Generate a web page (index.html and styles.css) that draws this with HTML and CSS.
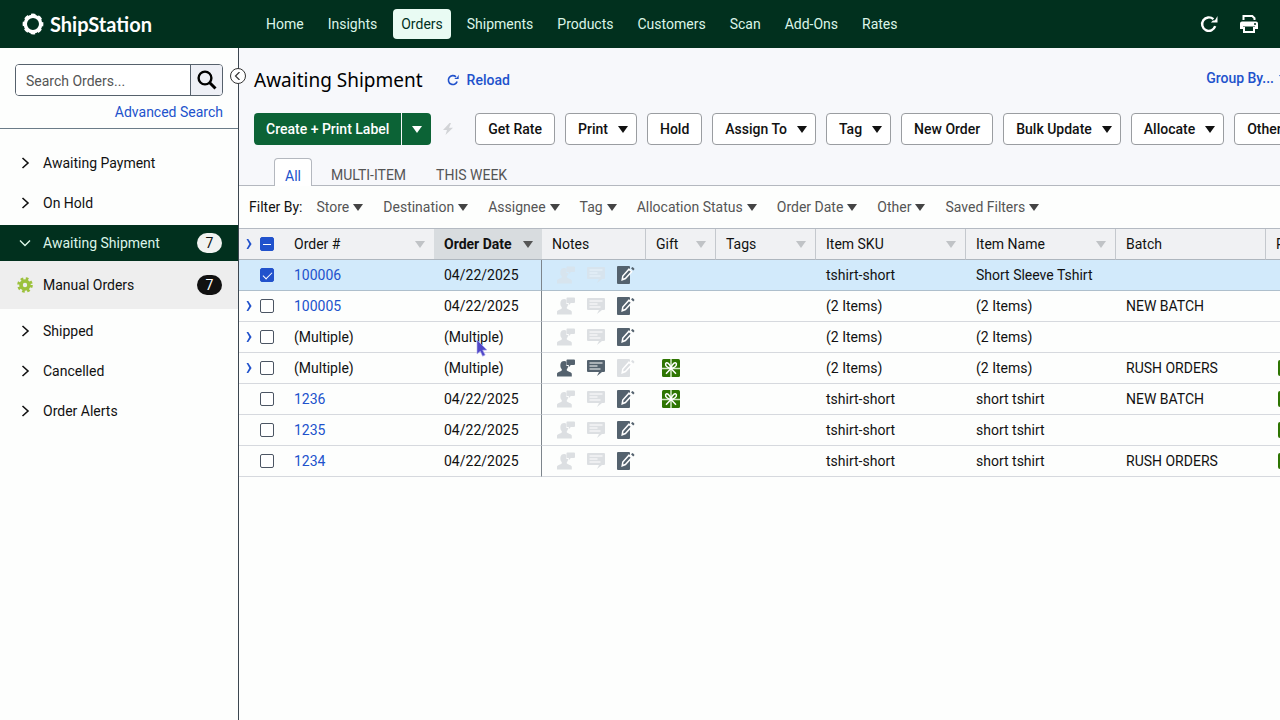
FILE: index.html
```html
<!DOCTYPE html>
<html lang="en">
<head>
    <meta charset="UTF-8">
    <meta name="viewport" content="width=device-width, initial-scale=1.0">
    <title>ShipStation - Orders</title>
    <link rel="stylesheet" href="styles.css">
</head>
<body>

    <!-- Shared icons -->
    <svg class="sprite" aria-hidden="true">
        <symbol id="i-refresh" viewBox="0 0 18 18">
            <path d="M15.200 11.200A6.700 6.700 0 1 1 13.400 4.200" fill="none" stroke="currentColor" stroke-width="2.400"/>
            <path d="M17.500 1v6.600h-6.600l2-2.100 1.600.1 1-1z" fill="currentColor"/>
        </symbol>
        <symbol id="i-right" viewBox="0 0 12 12">
            <path d="M3.500 1L9 6l-5.500 5" fill="none" stroke="currentColor" stroke-width="1.600"/>
        </symbol>
        <symbol id="i-expand" viewBox="0 0 6 10">
            <path d="M.5 0h1.800L5.600 5 2.300 10H.5L3.300 5z" fill="currentColor"/>
        </symbol>
        <symbol id="i-person" viewBox="0 0 18 18">
            <path d="M0 17.500v-2.800c0-1.400 3.800-2.200 4.800-3.200v-1.200C3.600 9 3.200 7.200 3.400 5.400 3.700 3.200 5.200 2 7.200 2c1 0 1.600.2 2.200.7v4.200h1.800c-.2 1.400-.7 2.600-1.400 3.400v1.200c1 1 5 1.800 5 3.200v2.800z" fill="currentColor"/>
            <path d="M10.300.5h6.700q1 0 1 1v3.600q0 1-1 1h-3.200l-2 2.200v-2.200h-1.500q-.8 0-.8-.8V1.300q0-.8.8-.8z" fill="currentColor"/>
        </symbol>
        <symbol id="i-comment" viewBox="0 0 18 18">
            <path d="M1 1h16q1 0 1 1v10q0 1-1 1h-2l-5 4 2-4H1q-1 0-1-1V2q0-1 1-1z" fill="currentColor"/>
            <path d="M2.500 4h13M2.500 7h8M2.500 10h11" stroke="#fff" stroke-width="1.200"/>
        </symbol>
        <symbol id="i-note" viewBox="0 0 18 18">
            <path d="M1 0h11q1 0 1 1v16q0 1-1 1H1q-1 0-1-1V1q0-1 1-1z" fill="currentColor"/>
            <path d="M12 3.200l2.600 2.600-6.200 6.700-3.200 1.300.6-3.700z" fill="currentColor" stroke="#fff" stroke-width="1.500"/>
            <path d="M14 2.200l1.200-1q.5-.3 1 .2l1 1q.5.5 0 1l-1 1.200z" fill="currentColor"/>
        </symbol>
        <symbol id="i-gift" viewBox="0 0 18 18">
            <rect width="18" height="18" rx="1.500" fill="#2e7502"/>
            <path d="M9 0v18M0 9.500h18" stroke="#d5eac8" stroke-width="1.500"/>
            <path d="M9 9.500C6 9 3.200 7 3.600 4.800 4.500 2.500 8 4.500 9 9.500c1-5 4.500-7 5.400-4.700C14.800 7 12 9 9 9.500zM9 9.500l-5 5.200M9 9.500l5 5.200" fill="none" stroke="#fff" stroke-width="1.500"/>
        </symbol>
    </svg>

    <header class="topbar">
        <a href="#" class="logo">
            <svg width="22" height="22" viewBox="-11 -11 22 22" aria-hidden="true">
                <circle r="7.700" fill="none" stroke="#fff" stroke-width="3.400"/>
                <circle r="9.300" fill="none" stroke="#fff" stroke-width="2.200" stroke-dasharray="4.400 2.900" stroke-dashoffset="2.200"/>
            </svg>
            <span>ShipStation</span>
        </a>
        <nav class="nav">
            <a href="#">Home</a>
            <a href="#">Insights</a>
            <a href="#" class="current">Orders</a>
            <a href="#">Shipments</a>
            <a href="#">Products</a>
            <a href="#">Customers</a>
            <a href="#">Scan</a>
            <a href="#">Add-Ons</a>
            <a href="#">Rates</a>
        </nav>
        <div class="top-actions">
            <button type="button" aria-label="Refresh"><svg width="18" height="18"><use href="#i-refresh"/></svg></button>
            <button type="button" aria-label="Print">
                <svg width="18" height="18" viewBox="0 0 18 18">
                    <path d="M3.500 5V1h8.800l2.200 2.200V5" fill="none" stroke="currentColor" stroke-width="2"/>
                    <path d="M2 6.500h14q2 0 2 2V14h-3v-2.500H3V14H0V8.500q0-2 2-2z" fill="currentColor"/>
                    <path d="M4 12v5h10v-5" fill="none" stroke="currentColor" stroke-width="2"/>
                    <circle cx="15" cy="9" r="1" fill="#01301e"/>
                </svg>
            </button>
        </div>
    </header>

    <div class="page">
        <aside class="sidebar">
            <button type="button" class="collapse" aria-label="Collapse sidebar">
                <svg width="8" height="8" viewBox="0 0 8 8"><path d="M5.500 0L1.500 4l4 4" fill="none" stroke="#333" stroke-width="1.200"/></svg>
            </button>
            <form class="search">
                <div class="search-box">
                    <input type="text" placeholder="Search Orders..." aria-label="Search Orders">
                    <button type="submit" aria-label="Search">
                        <svg width="20" height="20" viewBox="0 0 20 20"><circle cx="8" cy="8" r="6.400" fill="none" stroke="#000" stroke-width="2.400"/><path d="M12.500 12.500l6 6" stroke="#000" stroke-width="3"/></svg>
                    </button>
                </div>
                <a href="#">Advanced Search</a>
            </form>
            <ul class="status-list">
                <li><a href="#"><svg width="12" height="12"><use href="#i-right"/></svg>Awaiting Payment</a></li>
                <li><a href="#"><svg width="12" height="12"><use href="#i-right"/></svg>On Hold</a></li>
                <li class="active"><a href="#"><svg width="12" height="12" viewBox="0 0 12 12"><path d="M1 3.500l5 5 5-5" fill="none" stroke="currentColor" stroke-width="1.400"/></svg>Awaiting Shipment <span class="count">7</span></a></li>
                <li class="sub"><a href="#"><svg class="gear" width="16" height="16" viewBox="-8 -8 16 16"><circle r="4" fill="none" stroke="#9cc13c" stroke-width="3.600"/><circle r="6.400" fill="none" stroke="#9cc13c" stroke-width="2.800" stroke-dasharray="2.600 2.427"/></svg>Manual Orders <span class="count">7</span></a></li>
                <li><a href="#"><svg width="12" height="12"><use href="#i-right"/></svg>Shipped</a></li>
                <li><a href="#"><svg width="12" height="12"><use href="#i-right"/></svg>Cancelled</a></li>
                <li><a href="#"><svg width="12" height="12"><use href="#i-right"/></svg>Order Alerts</a></li>
            </ul>
        </aside>

        <main class="main">
            <div class="main-head">
                <div class="title-row">
                    <h1>Awaiting Shipment</h1>
                    <button type="button" class="link-btn"><svg width="12" height="12"><use href="#i-refresh"/></svg>Reload</button>
                    <button type="button" class="link-btn group-by">Group By...<span class="caret"></span></button>
                </div>
                <div class="toolbar">
                    <div class="split">
                        <button type="button">Create + Print Label</button>
                        <button type="button" class="split-arrow" aria-label="More label options"><span class="caret"></span></button>
                    </div>
                    <svg class="bolt" width="10" height="12" viewBox="0 0 10 12"><path d="M6.500 0L0 7h4l-1.500 5L10 4.700H6L8 0z" fill="#d2d4d7"/></svg>
                    <button type="button" class="btn">Get Rate</button>
                    <button type="button" class="btn">Print<span class="caret"></span></button>
                    <button type="button" class="btn">Hold</button>
                    <button type="button" class="btn">Assign To<span class="caret"></span></button>
                    <button type="button" class="btn">Tag<span class="caret"></span></button>
                    <button type="button" class="btn">New Order</button>
                    <button type="button" class="btn">Bulk Update<span class="caret"></span></button>
                    <button type="button" class="btn">Allocate<span class="caret"></span></button>
                    <button type="button" class="btn">Other<span class="caret"></span></button>
                </div>
                <div class="tabs">
                    <a href="#" class="tab selected">All</a>
                    <a href="#" class="tab">MULTI-ITEM</a>
                    <a href="#" class="tab">THIS WEEK</a>
                </div>
            </div>

            <div class="filters">
                <span class="filters-label">Filter By:</span>
                <button type="button">Store<span class="caret"></span></button>
                <button type="button">Destination<span class="caret"></span></button>
                <button type="button">Assignee<span class="caret"></span></button>
                <button type="button">Tag<span class="caret"></span></button>
                <button type="button">Allocation Status<span class="caret"></span></button>
                <button type="button">Order Date<span class="caret"></span></button>
                <button type="button">Other<span class="caret"></span></button>
                <button type="button">Saved Filters<span class="caret"></span></button>
            </div>

            <table class="orders">
                <colgroup>
                    <col class="w-expand"><col class="w-check"><col class="w-wide"><col class="w-date"><col class="w-notes">
                    <col class="w-gift"><col class="w-tags"><col class="w-wide"><col class="w-wide"><col class="w-wide"><col class="w-wide">
                </colgroup>
                <thead>
                    <tr>
                        <th class="expand"><svg width="6" height="10"><use href="#i-expand"/></svg></th>
                        <th class="check"><input type="checkbox" id="checkAll" aria-label="Select all orders"></th>
                        <th><div>Order #<span class="caret"></span></div></th>
                        <th class="sorted"><div>Order Date<span class="caret"></span></div></th>
                        <th class="line">Notes</th>
                        <th class="line"><div>Gift<span class="caret"></span></div></th>
                        <th class="line"><div>Tags<span class="caret"></span></div></th>
                        <th class="line"><div>Item SKU<span class="caret"></span></div></th>
                        <th class="line"><div>Item Name<span class="caret"></span></div></th>
                        <th class="line">Batch</th>
                        <th>Recipient</th>
                    </tr>
                </thead>
                <tbody>
                    <tr class="selected">
                        <td class="expand"></td>
                        <td class="check"><input type="checkbox" aria-label="Select order 100006" checked></td>
                        <td><a href="#">100006</a></td>
                        <td class="date">04/22/2025</td>
                        <td><div class="notes"><svg><use href="#i-person"/></svg><svg><use href="#i-comment"/></svg><svg class="on"><use href="#i-note"/></svg></div></td>
                        <td class="gift"></td>
                        <td></td>
                        <td>tshirt-short</td>
                        <td>Short Sleeve Tshirt</td>
                        <td></td>
                        <td></td>
                    </tr>
                    <tr>
                        <td class="expand"><svg width="6" height="10"><use href="#i-expand"/></svg></td>
                        <td class="check"><input type="checkbox" aria-label="Select order 100005"></td>
                        <td><a href="#">100005</a></td>
                        <td class="date">04/22/2025</td>
                        <td><div class="notes"><svg><use href="#i-person"/></svg><svg><use href="#i-comment"/></svg><svg class="on"><use href="#i-note"/></svg></div></td>
                        <td class="gift"></td>
                        <td></td>
                        <td>(2 Items)</td>
                        <td>(2 Items)</td>
                        <td>NEW BATCH</td>
                        <td></td>
                    </tr>
                    <tr>
                        <td class="expand"><svg width="6" height="10"><use href="#i-expand"/></svg></td>
                        <td class="check"><input type="checkbox" aria-label="Select order group"></td>
                        <td>(Multiple)</td>
                        <td class="date">(Multiple)
                            <svg class="pointer" width="12" height="18" viewBox="0 0 12 18"><path d="M1 1l10 10-4.300.2 2.500 4.800-2.600 1.200-2.300-4.900L1 15z" fill="#5048c8" stroke="#b5b1ee" stroke-width=".6"/></svg>
                        </td>
                        <td><div class="notes"><svg><use href="#i-person"/></svg><svg><use href="#i-comment"/></svg><svg class="on"><use href="#i-note"/></svg></div></td>
                        <td class="gift"></td>
                        <td></td>
                        <td>(2 Items)</td>
                        <td>(2 Items)</td>
                        <td></td>
                        <td></td>
                    </tr>
                    <tr>
                        <td class="expand"><svg width="6" height="10"><use href="#i-expand"/></svg></td>
                        <td class="check"><input type="checkbox" aria-label="Select order group"></td>
                        <td>(Multiple)</td>
                        <td class="date">(Multiple)</td>
                        <td><div class="notes"><svg class="on"><use href="#i-person"/></svg><svg class="on"><use href="#i-comment"/></svg><svg><use href="#i-note"/></svg></div></td>
                        <td class="gift"><svg width="18" height="18"><use href="#i-gift"/></svg></td>
                        <td></td>
                        <td>(2 Items)</td>
                        <td>(2 Items)</td>
                        <td>RUSH ORDERS</td>
                        <td><span class="flag"></span></td>
                    </tr>
                    <tr>
                        <td class="expand"></td>
                        <td class="check"><input type="checkbox" aria-label="Select order 1236"></td>
                        <td><a href="#">1236</a></td>
                        <td class="date">04/22/2025</td>
                        <td><div class="notes"><svg><use href="#i-person"/></svg><svg><use href="#i-comment"/></svg><svg class="on"><use href="#i-note"/></svg></div></td>
                        <td class="gift"><svg width="18" height="18"><use href="#i-gift"/></svg></td>
                        <td></td>
                        <td>tshirt-short</td>
                        <td>short tshirt</td>
                        <td>NEW BATCH</td>
                        <td><span class="flag"></span></td>
                    </tr>
                    <tr>
                        <td class="expand"></td>
                        <td class="check"><input type="checkbox" aria-label="Select order 1235"></td>
                        <td><a href="#">1235</a></td>
                        <td class="date">04/22/2025</td>
                        <td><div class="notes"><svg><use href="#i-person"/></svg><svg><use href="#i-comment"/></svg><svg class="on"><use href="#i-note"/></svg></div></td>
                        <td class="gift"></td>
                        <td></td>
                        <td>tshirt-short</td>
                        <td>short tshirt</td>
                        <td></td>
                        <td><span class="flag"></span></td>
                    </tr>
                    <tr>
                        <td class="expand"></td>
                        <td class="check"><input type="checkbox" aria-label="Select order 1234"></td>
                        <td><a href="#">1234</a></td>
                        <td class="date">04/22/2025</td>
                        <td><div class="notes"><svg><use href="#i-person"/></svg><svg><use href="#i-comment"/></svg><svg class="on"><use href="#i-note"/></svg></div></td>
                        <td class="gift"></td>
                        <td></td>
                        <td>tshirt-short</td>
                        <td>short tshirt</td>
                        <td>RUSH ORDERS</td>
                        <td><span class="flag"></span></td>
                    </tr>
                </tbody>
            </table>
        </main>
    </div>

    <script>
        // Only some of the rows are selected
        document.getElementById('checkAll').indeterminate = true;
    </script>

</body>
</html>
```
FILE: styles.css
```css
* {
    box-sizing: border-box;
}

body {
    margin: 0;
    min-height: 100vh;
    display: flex;
    flex-direction: column;
    font-family: Roboto, Arial, sans-serif;
    font-size: 14px;
    line-height: 20px;
    color: #111;
    background-color: #fdfefd;
}

a {
    color: #2152cc;
    text-decoration: none;
}

button {
    font: inherit;
    color: inherit;
    background: none;
    border: none;
    padding: 0;
    cursor: pointer;
}

svg {
    display: block;
    flex-shrink: 0;
}

.sprite {
    position: absolute;
    width: 0;
    height: 0;
}

.caret {
    flex-shrink: 0;
    border-left: 5px solid transparent;
    border-right: 5px solid transparent;
    border-top: 7px solid currentColor;
}

/* Top bar */
.topbar {
    height: 48px;
    display: flex;
    align-items: center;
    padding: 0 22px;
    background-color: #01301e;
    color: #fff;
}

.logo {
    width: 236px;
    display: flex;
    align-items: center;
    gap: 6px;
    color: #fff;
    font-family: Lato, sans-serif;
    font-size: 20px;
    font-weight: 700;
}

.nav {
    display: flex;
    gap: 8px;
}

.nav a {
    padding: 5px 8px;
    border-radius: 4px;
    color: #dcf5e8;
}

.nav a.current {
    background-color: #e9fbf3;
    color: #01301e;
}

.top-actions {
    display: flex;
    gap: 22px;
    margin-left: auto;
}

/* Sidebar */
.page {
    flex: 1;
    display: flex;
}

.sidebar {
    position: relative;
    width: 239px;
    flex-shrink: 0;
    border-right: 1px solid #3c4650;
}

.collapse {
    position: absolute;
    top: 20px;
    right: -8px;
    width: 16px;
    height: 16px;
    display: flex;
    align-items: center;
    justify-content: center;
    border: 1px solid #333;
    border-radius: 50%;
    background-color: #fff;
}

.search {
    padding: 16px 15px 6px;
    border-bottom: 1px solid #6b7c88;
    text-align: right;
}

.search-box {
    height: 32px;
    display: flex;
    margin-bottom: 6px;
    border: 1px solid #56616c;
    border-radius: 4px;
    overflow: hidden;
}

.search-box input {
    flex: 1;
    min-width: 0;
    padding: 2px 10px 0;
    border: none;
    background-color: #fff;
    font: inherit;
}

.search-box input::placeholder {
    color: #555;
}

.search-box button {
    width: 32px;
    display: flex;
    align-items: center;
    justify-content: center;
    border-left: 1px solid #56616c;
    background-color: #eef0f6;
}

.status-list {
    list-style: none;
    margin: 0;
    padding: 14px 0;
}

.status-list a {
    height: 40px;
    display: flex;
    align-items: center;
    gap: 12px;
    padding: 0 16px 0 19px;
    color: #111;
}

.status-list svg {
    width: 12px;
}

.status-list .gear {
    width: 16px;
    margin: 0 -2px;
}

.status-list .active {
    margin-top: 2px;
}

.status-list .active a {
    height: 36px;
    background-color: #01301e;
    color: #dcf5e8;
}

.status-list .sub {
    margin-bottom: 2px;
}

.status-list .sub a {
    height: 48px;
    background-color: #eee;
}

.count {
    width: 25px;
    margin-left: auto;
    border-radius: 10px;
    background-color: #111;
    color: #fff;
    text-align: center;
}

.active .count {
    background-color: #f1f3f1;
    color: #111;
}

/* Main */
.main {
    flex: 1;
    min-width: 0;
    overflow: hidden;
}

.main-head {
    padding: 16px 0 0 15px;
    background-color: #f7f8fb;
    border-bottom: 1px solid #b4b8bf;
}

.title-row {
    height: 32px;
    display: flex;
    align-items: center;
}

h1 {
    margin: 0 24px 0 0;
    font-family: "Noto Sans", sans-serif;
    font-size: 19px;
    font-weight: 400;
    color: #000;
}

.link-btn {
    display: flex;
    align-items: center;
    gap: 8px;
    color: #2152cc;
    font-weight: 500;
}

.group-by {
    gap: 5px;
    margin: 0 -9px 4px auto;
}

.toolbar {
    display: flex;
    align-items: center;
    gap: 10px;
    margin-top: 17px;
}

.split {
    display: flex;
    flex-shrink: 0;
    gap: 1px;
}

.split button {
    height: 32px;
    padding: 0 12px;
    border-radius: 4px 0 0 4px;
    background-color: #0c6336;
    color: #fff;
    font-weight: 500;
}

.split .split-arrow {
    display: flex;
    align-items: center;
    padding: 0 9px 0 10px;
    border-radius: 0 4px 4px 0;
}

.bolt {
    margin: 0 12px 0 2px;
}

.btn {
    height: 32px;
    display: flex;
    flex-shrink: 0;
    align-items: center;
    gap: 10px;
    padding: 0 12px;
    border: 1px solid #9a9da1;
    border-radius: 4px;
    background-color: #fff;
    font-weight: 500;
}

.btn .caret {
    margin-right: -4px;
}

.tabs {
    display: flex;
    margin: 13px 0 -1px 20px;
}

.tab {
    height: 28px;
    padding: 7px 15px 0;
    color: #555;
}

.tab.selected {
    margin-right: 4px;
    padding: 7px 10px 0;
    border: 1px solid #b4b8bf;
    border-bottom: none;
    border-radius: 4px 4px 0 0;
    background-color: #fff;
    color: #2152cc;
}

.filters {
    height: 42px;
    display: flex;
    align-items: center;
    gap: 20px;
    padding-left: 10px;
}

.filters-label {
    margin-right: -6px;
}

.filters button {
    display: flex;
    align-items: center;
    gap: 4px;
    color: #555;
    white-space: nowrap;
}

.filters .caret {
    color: #444;
}

/* Orders table */
.orders {
    width: 1177px;
    table-layout: fixed;
    border-collapse: separate;
    border-spacing: 0;
    border-top: 1px solid #b4bac2;
}

.w-expand {
    width: 18px;
}

.w-check {
    width: 27px;
}

.w-wide {
    width: 150px;
}

.w-date {
    width: 108px;
}

.w-notes {
    width: 104px;
}

.w-gift {
    width: 70px;
}

.w-tags {
    width: 100px;
}

th,
td {
    height: 31px;
    padding: 0 10px;
    border-bottom: 1px solid #d6d9de;
    text-align: left;
    white-space: nowrap;
}

th {
    border-bottom-color: #aeb6be;
    background-color: #f0f1f3;
    font-weight: 400;
}

th.line {
    border-right: 1px solid #c4c8cd;
}

th div {
    display: flex;
    align-items: center;
    justify-content: space-between;
}

th .caret {
    margin-right: -1px;
    color: #c0c3c6;
}

th.sorted {
    background-color: #d8dcdf;
    font-weight: 700;
}

th.sorted .caret {
    color: #555;
}

.selected td {
    background-color: #d2eafb;
    border-bottom-color: #aebfcc;
}

td.date {
    position: relative;
    border-right: 1px solid #7d858c;
}

.expand {
    padding: 0 0 0 7px;
    color: #2152cc;
}

.check {
    padding: 0 0 0 3px;
}

.check input {
    appearance: none;
    display: block;
    width: 14px;
    height: 14px;
    margin: 0;
    border: 1px solid #4b5563;
    border-radius: 2px;
    background-color: #fff;
}

.check input:checked,
.check input:indeterminate {
    border-color: #2152cc;
    background-color: #2152cc;
}

.check input:checked::after {
    content: "";
    display: block;
    width: 4px;
    height: 8px;
    margin: 1px 4px;
    border: solid #fff;
    border-width: 0 1px 1px 0;
    transform: rotate(45deg);
}

.check input:indeterminate::after {
    content: "";
    display: block;
    height: 1px;
    margin: 6px 2px;
    background-color: #fff;
}

.notes {
    display: flex;
    gap: 12px;
    padding-left: 5px;
    color: #dcdfe2;
}

.notes svg {
    width: 18px;
    height: 18px;
}

.notes .on {
    color: #54626e;
}

.selected .notes svg:not(.on) {
    opacity: 0.5;
}

td.gift {
    padding-left: 16px;
}

.flag {
    display: block;
    width: 18px;
    height: 16px;
    margin-left: 2px;
    border-radius: 2px;
    background-color: #2e7502;
}

/* Mouse pointer over the grouped order */
.pointer {
    position: absolute;
    top: 17px;
    left: 42px;
}
```
